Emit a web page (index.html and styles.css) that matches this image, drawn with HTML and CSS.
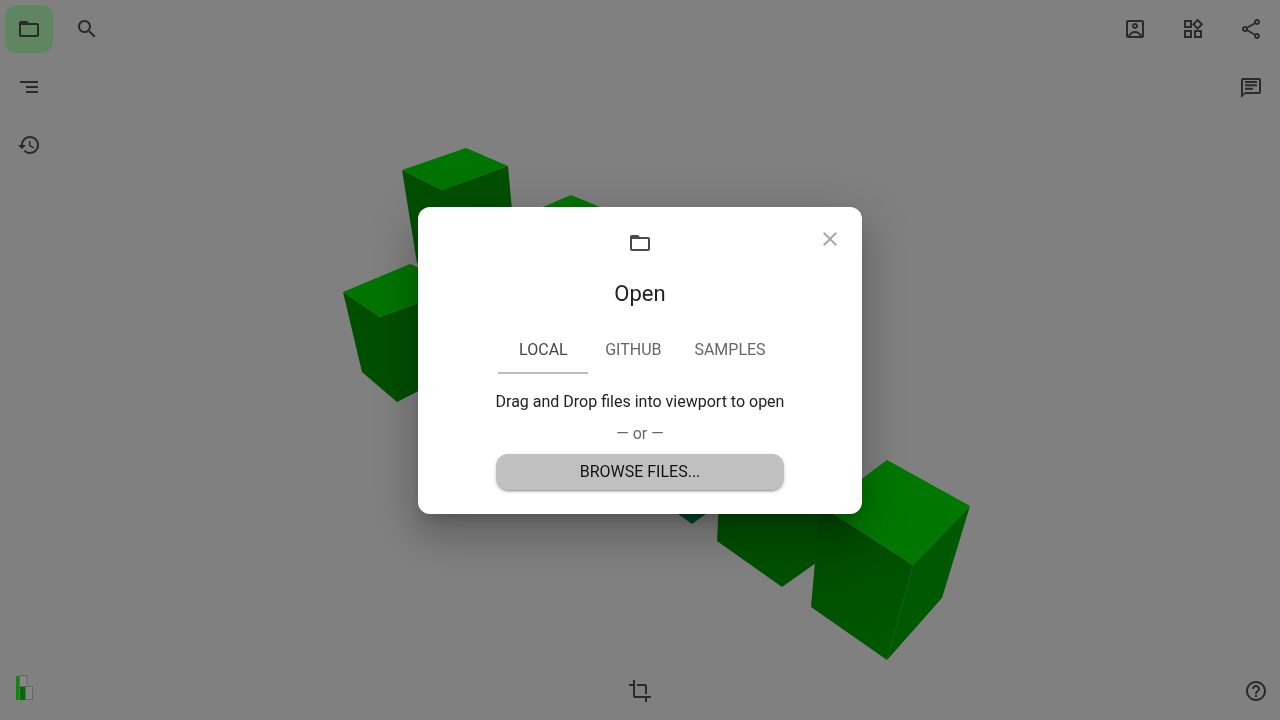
FILE: index.html
```html
<!DOCTYPE html>
<html lang="en">
<head>
    <meta charset="UTF-8">
    <meta name="viewport" content="width=device-width, initial-scale=1.0">
    <title>Open</title>
    <link rel="stylesheet" href="styles.css">
</head>
<body>

    <!-- 3D viewport -->
    <svg class="scene" viewBox="0 0 1280 720" width="1280" height="720">
        <defs>
            <linearGradient id="faceShade" gradientUnits="userSpaceOnUse" x1="830" y1="510" x2="880" y2="650">
                <stop offset="0" stop-color="#004800"/>
                <stop offset="1" stop-color="#005800"/>
            </linearGradient>
        </defs>
        <polygon class="side-dark" points="402,170 442,190 508,166 520,300 417,263"/>
        <polygon class="top" points="402,170 466,148 508,166 442,190"/>
        <polygon class="top" points="543,207 571,195 600,207 600,240 543,240"/>
        <polygon class="side-dark" points="343,292 380,317 440,295 440,380 397,402 362,372"/>
        <polygon class="top" points="343,292 410,264 440,277 440,295 380,317"/>
        <polygon class="side-teal" points="670,500 720,500 706,514 692,524 678,514"/>
        <polygon class="side-dark" points="719,500 830,500 830,553 782,587 717,541"/>
        <polygon class="side-mid" points="820,505 913,565 887,660 811,607"/>
        <polygon class="side-light" points="970,506 913,565 887,660 942,598"/>
        <polygon class="top-light" points="887,460 970,506 913,565 820,505 820,510"/>
    </svg>

    <div class="hud">
        <div class="hud-top">
            <div class="tools">
                <div class="tool-row">
                    <button class="tool active">
                        <svg viewBox="0 0 24 24"><path d="M20 6h-8l-2-2H4c-1.1 0-1.99.9-1.99 2L2 18c0 1.1.9 2 2 2h16c1.1 0 2-.9 2-2V8c0-1.1-.9-2-2-2zm0 12H4V8h16v10z"/></svg>
                    </button>
                    <button class="tool">
                        <svg viewBox="0 0 24 24"><path d="M15.5 14h-.79l-.28-.27C15.41 12.59 16 11.11 16 9.5 16 5.91 13.09 3 9.5 3S3 5.91 3 9.5 5.91 16 9.5 16c1.61 0 3.09-.59 4.23-1.57l.27.28v.79l5 4.99L20.49 19l-4.99-5zm-6 0C7.01 14 5 11.99 5 9.5S7.01 5 9.5 5 14 7.01 14 9.5 11.99 14 9.5 14z"/></svg>
                    </button>
                </div>
                <button class="tool">
                    <svg viewBox="0 0 24 24"><path d="M3 6h18v2H3zM9 11h12v2H9zM9 16h12v2H9z"/></svg>
                </button>
                <button class="tool">
                    <svg viewBox="0 0 24 24"><path d="M13 3c-4.97 0-9 4.03-9 9H1l3.89 3.89.07.14L9 12H6c0-3.87 3.13-7 7-7s7 3.13 7 7-3.13 7-7 7c-1.93 0-3.68-.79-4.94-2.06l-1.42 1.42C8.27 19.99 10.51 21 13 21c4.97 0 9-4.03 9-9s-4.03-9-9-9zm-1 5v5l4.28 2.54.72-1.21-3.5-2.08V8H12z"/></svg>
                </button>
            </div>
            <div class="tools tools-right">
                <div class="tool-row">
                    <button class="tool">
                        <svg viewBox="0 0 24 24"><path d="M19 3H5c-1.1 0-2 .9-2 2v14c0 1.1.9 2 2 2h14c1.1 0 2-.9 2-2V5c0-1.100-.9-2-2-2zm0 16H5V5h14v14z"/><path d="M12 12c1.660 0 3-1.340 3-3s-1.340-3-3-3-3 1.340-3 3 1.340 3 3 3zm0-4c.55 0 1 .45 1 1s-.45 1-1 1-1-.45-1-1 .45-1 1-1z"/><path d="M5 19c1-3 4-5 7-5s6 2 7 5h-2.200c-.8-1.900-2.800-3-4.800-3s-4 1.100-4.800 3z"/></svg>
                    </button>
                    <button class="tool">
                        <svg viewBox="0 0 24 24"><path d="M16.660 4.520l2.830 2.830-2.830 2.830-2.830-2.830 2.830-2.830M9 5v4H5V5h4m10 10v4h-4v-4h4M9 15v4H5v-4h4m7.660-13.310L11 7.340 16.660 13l5.660-5.660-5.660-5.650zM11 3H3v8h8V3zm10 10h-8v8h8v-8zm-10 0H3v8h8v-8z"/></svg>
                    </button>
                    <button class="tool">
                        <svg viewBox="0 0 24 24"><path d="M18 16.080c-.76 0-1.440.3-1.960.77L8.910 12.700c.05-.23.09-.46.09-.7s-.04-.47-.09-.7l7.050-4.110c.54.5 1.250.81 2.040.81 1.660 0 3-1.340 3-3s-1.340-3-3-3-3 1.340-3 3c0 .24.04.47.09.7L8.040 9.810C7.500 9.310 6.790 9 6 9c-1.660 0-3 1.340-3 3s1.340 3 3 3c.79 0 1.500-.31 2.040-.81l7.120 4.160c-.05.21-.08.43-.08.65 0 1.610 1.310 2.920 2.920 2.920s2.920-1.310 2.920-2.920-1.310-2.920-2.920-2.920zM18 4c.55 0 1 .45 1 1s-.45 1-1 1-1-.45-1-1 .45-1 1-1zM6 13c-.55 0-1-.45-1-1s.45-1 1-1 1 .45 1 1-.45 1-1 1zm12 7.020c-.55 0-1-.45-1-1s.45-1 1-1 1 .45 1 1-.45 1-1 1z"/></svg>
                    </button>
                </div>
                <button class="tool">
                    <svg viewBox="0 0 24 24"><path d="M20 3H4c-1.100 0-2 .9-2 2v18l4-4h14c1.100 0 2-.9 2-2V5c0-1.100-.9-2-2-2zm0 14H6l-2 2V5h16v12z"/><path d="M6 6h12v2H6zM6 9.300h12v2H6zM6 12.700h8v2H6z"/></svg>
                </button>
            </div>
        </div>
        <div class="hud-bottom">
            <svg class="logo" viewBox="0 0 20 26" width="20" height="26">
                <rect x="1" y="2" width="3.500" height="24" fill="#0a8a0a"/>
                <rect x="5" y="11" width="5.500" height="15" fill="#056a05"/>
                <rect x="4.500" y="1.500" width="7.500" height="11" fill="#868686" stroke="#666"/>
                <rect x="10.500" y="12.500" width="7" height="13" fill="#868686" stroke="#666"/>
            </svg>
            <button class="tool">
                <svg viewBox="0 0 24 24"><path d="M17 15h2V7c0-1.100-.9-2-2-2H9v2h8v8zM7 17V1H5v4H1v2h4v10c0 1.100.9 2 2 2h10v4h2v-4h4v-2H7z"/></svg>
            </button>
            <button class="tool tool-help">
                <svg viewBox="0 0 24 24"><path d="M11 18h2v-2h-2v2zm1-16C6.480 2 2 6.480 2 12s4.480 10 10 10 10-4.480 10-10S17.520 2 12 2zm0 18c-4.410 0-8-3.590-8-8s3.590-8 8-8 8 3.590 8 8-3.590 8-8 8zm0-14c-2.210 0-4 1.790-4 4h2c0-1.100.9-2 2-2s2 .9 2 2c0 2-3 1.750-3 5h2c0-2.250 3-2.500 3-5 0-2.210-1.790-4-4-4z"/></svg>
            </button>
        </div>
    </div>

    <!-- Open dialog -->
    <div class="overlay">
        <div class="dialog">
            <button class="close">
                <svg viewBox="0 0 24 24"><path d="M19 6.410L17.590 5 12 10.590 6.410 5 5 6.410 10.590 12 5 17.590 6.410 19 12 13.410 17.590 19 19 17.590 13.410 12 19 6.410z"/></svg>
            </button>
            <svg class="dialog-icon" viewBox="0 0 24 24"><path d="M20 6h-8l-2-2H4c-1.100 0-1.990.9-1.990 2L2 18c0 1.100.9 2 2 2h16c1.100 0 2-.9 2-2V8c0-1.100-.9-2-2-2zm0 12H4V8h16v10z"/></svg>
            <h2 class="dialog-title">Open</h2>
            <div class="tabs">
                <button class="tab selected">LOCAL</button>
                <button class="tab">GITHUB</button>
                <button class="tab">SAMPLES</button>
            </div>
            <p class="hint">Drag and Drop files into viewport to open</p>
            <p class="or">— or —</p>
            <button class="browse">BROWSE FILES...</button>
        </div>
    </div>

</body>
</html>
```

FILE: styles.css
```css
* {
    box-sizing: border-box;
}

body {
    margin: 0;
    width: 1280px;
    height: 720px;
    position: relative;
    overflow: hidden;
    background-color: #808080;
    font-family: Roboto, "Liberation Sans", sans-serif;
}

button {
    border: none;
    background: none;
    padding: 0;
    font-family: inherit;
}

/* Scene */
.scene {
    position: absolute;
    top: 0;
    left: 0;
}

.top {
    fill: #007400;
}

.top-light {
    fill: #007700;
}

.side-dark {
    fill: #004f00;
}

.side-mid {
    fill: url(#faceShade);
}

.side-light {
    fill: #005800;
}

.side-teal {
    fill: #00452a;
}

/* Toolbars */
.hud {
    position: absolute;
    top: 0;
    left: 0;
    width: 100%;
    height: 100%;
    display: flex;
    flex-direction: column;
    justify-content: space-between;
}

.hud-top {
    display: flex;
    justify-content: space-between;
}

.tools {
    display: flex;
    flex-direction: column;
    align-items: flex-start;
}

.tools-right {
    align-items: flex-end;
}

.tool-row {
    display: flex;
}

.tool {
    width: 48px;
    height: 48px;
    margin: 5px;
    border-radius: 12px;
    display: flex;
    justify-content: center;
    align-items: center;
}

.tool svg {
    width: 24px;
    height: 24px;
    fill: #2a2a2a;
}

.tool.active {
    background-color: #5f8660;
}

.hud-bottom {
    display: grid;
    grid-template-columns: 1fr auto 1fr;
    align-items: center;
}

.logo {
    margin-left: 15px;
    margin-top: -9px;
}

.tool-help {
    justify-self: end;
    margin-right: 0;
}

/* Dialog */
.overlay {
    position: absolute;
    top: 0;
    left: 0;
    width: 100%;
    height: 100%;
    display: flex;
    justify-content: center;
    align-items: center;
}

.dialog {
    position: relative;
    width: 444px;
    height: 307px;
    margin-top: 1px;
    padding: 24px;
    background-color: #fff;
    border-radius: 12px;
    display: flex;
    flex-direction: column;
    align-items: center;
    will-change: transform;
    box-shadow: 0 11px 15px -7px rgba(0, 0, 0, 0.2), 0 24px 38px 3px rgba(0, 0, 0, 0.14), 0 9px 46px 8px rgba(0, 0, 0, 0.12);
}

.close {
    position: absolute;
    top: 20px;
    right: 20px;
    width: 24px;
    height: 24px;
}

.close svg {
    width: 24px;
    height: 24px;
    fill: #a8a8a8;
}

.dialog-icon {
    width: 24px;
    height: 24px;
    fill: #4a4a4a;
}

.dialog-title {
    margin: 24px 0 17px;
    font-size: 22px;
    font-weight: 400;
    line-height: 30px;
    color: #222;
}

.tabs {
    display: flex;
}

.tab {
    min-width: 90px;
    height: 48px;
    padding: 0 16px;
    font-size: 16px;
    color: #666;
    border-bottom: 2px solid transparent;
}

.tab.selected {
    color: #444;
    border-bottom-color: #bdbdbd;
}

.hint {
    margin: 16px 0 0;
    font-size: 16px;
    line-height: 24px;
    color: #222;
}

.or {
    margin: 8px 0 0;
    font-size: 16px;
    line-height: 24px;
    color: #666;
}

.browse {
    width: 288px;
    height: 36px;
    margin-top: 8px;
    padding-bottom: 2px;
    flex: none;
    font-size: 16px;
    color: #111;
    background-color: #c0c0c0;
    border-radius: 12px;
    box-shadow: 0 3px 1px -2px rgba(0, 0, 0, 0.2), 0 2px 2px 0 rgba(0, 0, 0, 0.14), 0 1px 5px 0 rgba(0, 0, 0, 0.12);
}
```
